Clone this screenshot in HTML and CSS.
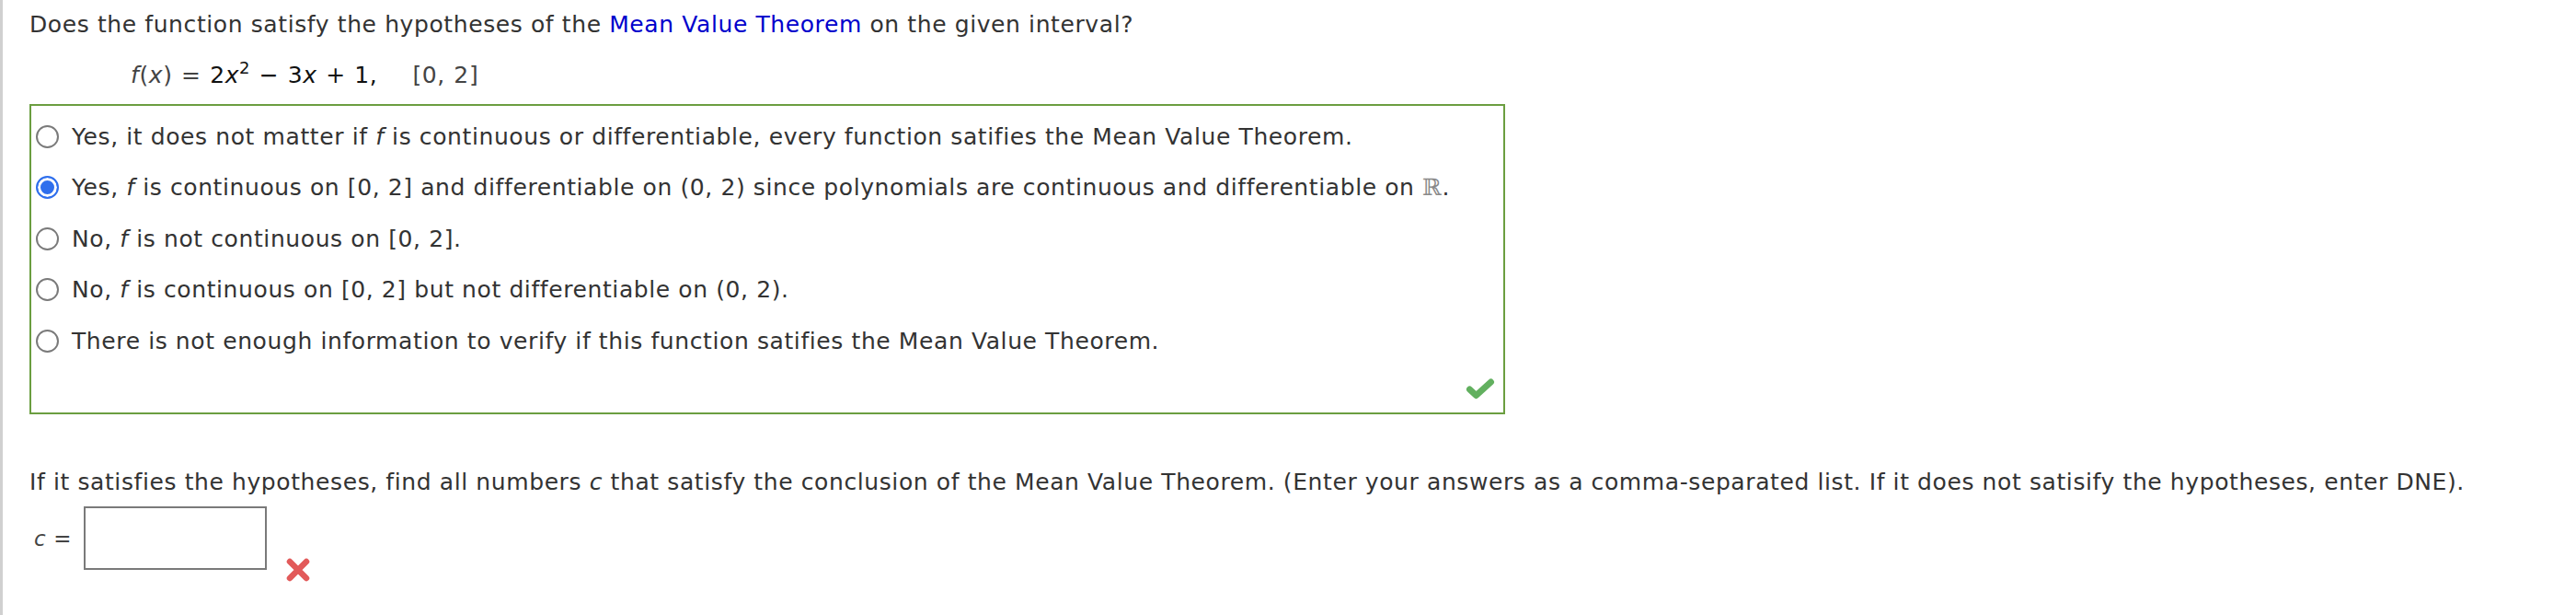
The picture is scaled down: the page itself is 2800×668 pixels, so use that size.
FILE: index.html
```html
<!DOCTYPE html>
<html>
<head>
<meta charset="utf-8">
<link rel="stylesheet" href="styles.css">
</head>
<body>
<div class="page">
  <p class="question">Does the function satisfy the hypotheses of the <span class="link">Mean Value Theorem</span> on the given interval?</p>
  <p class="formula"><span class="soft"><i>f</i>(<i>x</i>) = </span><span class="dark">2<i>x</i><sup>2</sup> − 3<i>x</i> + 1,</span><span class="soft interval">[0, 2]</span></p>

  <div class="choices">
    <label class="choice"><span class="radio"></span><span class="ctext">Yes, it does not matter if <i>f</i> is continuous or differentiable, every function satifies the Mean Value Theorem.</span></label>
    <label class="choice"><span class="radio checked"></span><span class="ctext">Yes, <i>f</i> is continuous on [0, 2] and differentiable on (0, 2) since polynomials are continuous and differentiable on <span class="reals">ℝ</span>.</span></label>
    <label class="choice"><span class="radio"></span><span class="ctext">No, <i>f</i> is not continuous on [0, 2].</span></label>
    <label class="choice"><span class="radio"></span><span class="ctext">No, <i>f</i> is continuous on [0, 2] but not differentiable on (0, 2).</span></label>
    <label class="choice"><span class="radio"></span><span class="ctext">There is not enough information to verify if this function satifies the Mean Value Theorem.</span></label>
    <div class="status">
      <svg class="check" width="32" height="24" viewBox="0 0 32 24"><polyline points="4.5,13 11.5,19.5 27.5,5" fill="none" stroke="#62b05f" stroke-width="7" stroke-linecap="round" stroke-linejoin="round"/></svg>
    </div>
  </div>

  <p class="question second">If it satisfies the hypotheses, find all numbers <i>c</i> that satisfy the conclusion of the Mean Value Theorem. (Enter your answers as a comma-separated list. If it does not satisify the hypotheses, enter DNE).</p>

  <div class="answer">
    <span class="clabel"><i>c</i> =</span>
    <span class="inputbox"></span>
    <svg class="cross" width="28" height="28" viewBox="0 0 28 28"><path d="M5 5 L23 23 M23 5 L5 23" fill="none" stroke="#e25a5a" stroke-width="6.5" stroke-linecap="round"/></svg>
  </div>
</div>
</body>
</html>
```

FILE: styles.css
```css
html, body {
  margin: 0;
  padding: 0;
  background: #fff;
}
body {
  font-family: "DejaVu Sans", Verdana, sans-serif;
  font-size: 25px;
  letter-spacing: 0.6px;
  color: #333;
}
.page {
  border-left: 3px solid #d0d0d0;
  min-height: 668px;
  box-sizing: border-box;
  padding-left: 29px;
  padding-top: 8.5px;
}
p {
  margin: 0;
}
.question {
  line-height: 36px;
}
.link {
  color: #0000cc;
}
.formula {
  margin-top: 19px;
  margin-left: 110px;
  line-height: 36px;
  word-spacing: 1px;
}
.formula .soft { color: #444; }
.formula .dark { color: #111; }
.formula sup {
  font-size: 18px;
  line-height: 0;
  vertical-align: 10px;
}
.interval {
  margin-left: 38px;
}
.choices {
  margin-top: 13.5px;
  width: 1604px;
  box-sizing: border-box;
  border: 2px solid #6b9e40;
  padding-top: 5.5px;
  display: flex;
  flex-direction: column;
}
.choice {
  display: flex;
  align-items: center;
  height: 55.5px;
  line-height: 55.5px;
}
.radio {
  width: 25px;
  height: 25px;
  box-sizing: border-box;
  border-radius: 50%;
  border: 2px solid #7a7a7a;
  background: #fff;
  margin-left: 5px;
  margin-right: 14px;
  flex: none;
}
.radio.checked {
  border: 2.5px solid #2f6fed;
  background: #2f6fed;
  box-shadow: inset 0 0 0 3px #fff;
}
.reals {
  font-family: "DejaVu Serif", serif;
  color: #8a8a8a;
}
.status {
  height: 50px;
  display: flex;
  justify-content: flex-end;
  align-items: flex-start;
  padding-right: 9px;
}
.check {
  margin-top: 12px;
}
.second {
  margin-top: 56px;
}
.answer {
  margin-top: 8px;
  display: flex;
  align-items: flex-start;
  margin-left: 5px;
}
.clabel {
  font-size: 23px;
  line-height: 36px;
  margin-top: 17px;
  color: #444;
  white-space: nowrap;
}
.inputbox {
  width: 199px;
  height: 69px;
  box-sizing: border-box;
  border: 2px solid #7a7a7a;
  margin-left: 13px;
}
.cross {
  margin-top: 55px;
  margin-left: 20px;
}
```
